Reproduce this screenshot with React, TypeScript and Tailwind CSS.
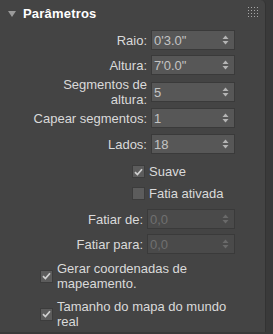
import React from 'react';

const font = { fontFamily: '"Liberation Sans", Arial, sans-serif' };

const Spinner: React.FC<{ dim?: boolean }> = ({ dim }) => (
  <svg width="7" height="10" viewBox="0 0 7 10" className="shrink-0">
    <path d="M3.5 0.5 L6.5 4 L0.5 4 Z" fill={dim ? '#6a6a6a' : '#b4b4b4'} />
    <path d="M3.5 9.5 L6.5 6 L0.5 6 Z" fill={dim ? '#6a6a6a' : '#b4b4b4'} />
  </svg>
);

const NumField: React.FC<{ label: React.ReactNode; value: string; disabled?: boolean; rowClass?: string }> = ({
  label,
  value,
  disabled,
  rowClass = '',
}) => (
  <div className={`flex items-center shrink-0 ${rowClass}`}>
    <div
      className={`text-right leading-[15px] text-[13px] text-[#dadada] ${disabled ? 'w-[143px]' : 'w-[147px]'}`}
    >
      {label}
    </div>
    <div
      className={`h-[20px] flex items-center justify-between pl-[2px] pr-[5px] border border-[#3a3a3a] leading-[15px] ${
        disabled ? 'ml-[4px] w-[88px] bg-[#4a4a4a] text-[#707070]' : 'ml-[4px] w-[84px] bg-[#575757] text-[#c4c4c4]'
      } text-[13px]`}
    >
      <span>{value}</span>
      <Spinner dim={disabled} />
    </div>
  </div>
);

const Check: React.FC<{ checked?: boolean }> = ({ checked }) => (
  <div className="w-[13px] h-[13px] bg-[#5c5c5c] border border-[#3c3c3c] flex items-center justify-center shrink-0">
    {checked && (
      <svg width="9" height="8" viewBox="0 0 9 8">
        <path d="M1 4.2 L3.4 6.6 L8 1.2" stroke="#d0d0d0" strokeWidth="1.7" fill="none" />
      </svg>
    )}
  </div>
);

export default function App() {
  return (
    <div className="w-[273px] h-[334px] bg-[#3a3a3a] flex overflow-hidden" style={font}>
      <div className="w-[266px] h-[332px] bg-[#444444] rounded-tr-[5px] border-r border-[#333333] flex flex-col">
        {/* Header */}
        <div className="h-[27px] shrink-0 flex items-center pl-[8px] pr-[7px]">
          <svg width="8" height="6" viewBox="0 0 8 6" className="mr-[7px]">
            <path d="M0 0 L8 0 L4 6 Z" fill="#9a9a9a" />
          </svg>
          <span className="text-[13px] leading-[15px] font-bold text-white tracking-[0.2px]">Parâmetros</span>
          <div className="ml-auto grid grid-cols-4 gap-[2px] mt-[-4px]">
            {Array.from({ length: 16 }).map((_, i) => (
              <div key={i} className="w-[1px] h-[1px] bg-[#a8a8a8]" />
            ))}
          </div>
        </div>

        <NumField label="Raio:" value={'0\'3.0"'} rowClass="mt-[3px]" />
        <NumField label="Altura:" value={'7\'0.0"'} rowClass="mt-[5px]" />
        <NumField
          label={
            <>
              Segmentos de
              <br />
              altura:
            </>
          }
          value="5"
          rowClass="mt-[2px]"
        />
        <NumField label="Capear segmentos:" value="1" rowClass="mt-[1px]" />
        <NumField label="Lados:" value="18" rowClass="mt-[6px]" />

        <div className="flex items-center shrink-0 pl-[132px] mt-[10px] text-[13px] leading-[15px] text-[#dadada]">
          <Check checked />
          <span className="ml-[4px]">Suave</span>
        </div>
        <div className="flex items-center shrink-0 pl-[132px] mt-[7px] text-[13px] leading-[15px] text-[#dadada]">
          <Check />
          <span className="ml-[4px]">Fatia ativada</span>
        </div>

        <NumField label="Fatiar de:" value="0,0" disabled rowClass="mt-[8px]" />
        <NumField label="Fatiar para:" value="0,0" disabled rowClass="mt-[5px]" />

        <div className="flex items-center shrink-0 pl-[40px] mt-[7px] text-[13px] text-[#dadada] leading-[15px]">
          <Check checked />
          <span className="ml-[4px]">
            Gerar coordenadas de
            <br />
            mapeamento.
          </span>
        </div>
        <div className="flex items-center shrink-0 pl-[40px] mt-[8px] text-[13px] text-[#dadada] leading-[15px]">
          <Check checked />
          <span className="ml-[4px]">
            Tamanho do mapa do mundo
            <br />
            real
          </span>
        </div>
      </div>
    </div>
  );
}
